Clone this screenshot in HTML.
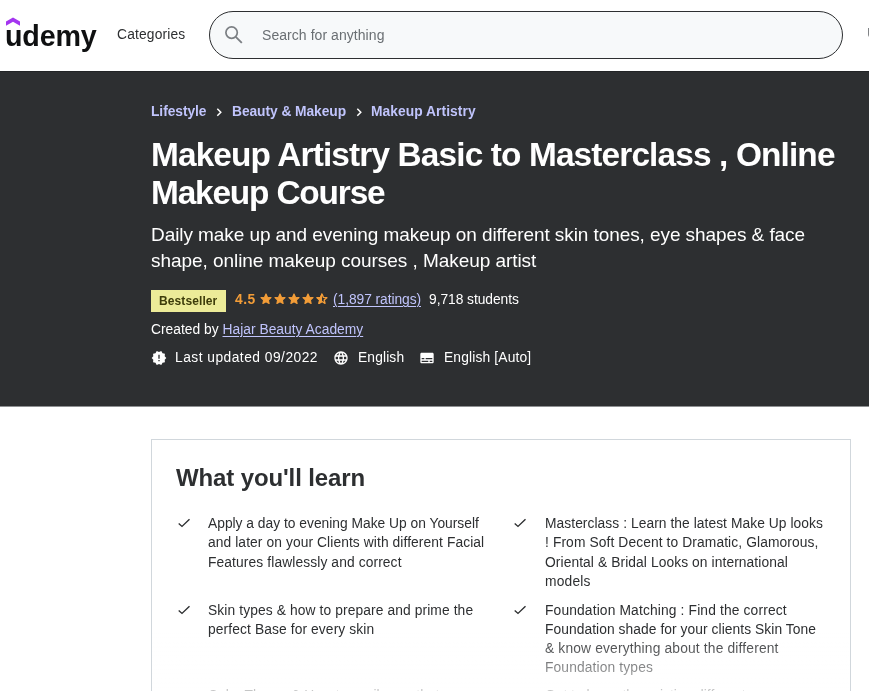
<!DOCTYPE html>
<html lang="en">
<head>
<meta charset="utf-8">
<title>Makeup Artistry Basic to Masterclass , Online Makeup Course | Udemy</title>
<style>
*{box-sizing:border-box;margin:0;padding:0}
html,body{width:869px;height:691px;overflow:hidden;background:#fff}
body{font-family:"Liberation Sans",sans-serif;color:#2d2f31;position:relative}
.abs{position:absolute;white-space:nowrap;will-change:transform}
.ic{position:absolute;display:block;overflow:visible}
a{color:inherit}
#header{position:absolute;left:0;top:0;width:869px;height:71px;background:#fff}
#logo{position:absolute;left:6px;top:17px;will-change:transform}
#cat{left:117px;top:27px;font-size:13.8px;line-height:16px;color:#2d2f31}
#search{position:absolute;left:209px;top:11px;width:634px;height:48px;border:1px solid #2d2f31;border-radius:24px;background:#f7f9fa}
#ph{left:262px;top:27px;font-size:14px;line-height:16px;color:#6a6f73}
#ub{left:867.1px;top:26px;font-size:13.8px;line-height:16px;color:#797c7f}
#hero{position:absolute;left:0;top:71px;width:869px;height:335px;background:#2d2f31;border-top:1px solid #222426;box-shadow:0 1px 0 #8e9092}
.bc{font-size:13.8px;font-weight:700;color:#c0c4fc;line-height:16px;top:104px}
.h1{font-size:33.4px;font-weight:700;color:#fff;line-height:38px}
.sub{font-size:19px;color:#fff;line-height:26px}
#badge{position:absolute;left:151px;top:290px;width:75px;height:22px;background:#eceb98}
#bt{left:159px;top:293px;font-size:12px;font-weight:700;line-height:16px;color:#3d3c0a}
.t14{font-size:13.8px;line-height:16px;color:#fff}
.lnk{color:#c0c4fc;text-decoration:underline;text-decoration-thickness:1px;text-underline-offset:2px}
#box{position:absolute;left:151px;top:439px;width:700px;height:300px;border:1px solid #d1d7dc;background:#fff}
#wyl{left:176px;top:464px;font-size:24px;font-weight:700;line-height:28px;color:#2d2f31}
.li{font-size:13.8px;line-height:19.6px;color:#2d2f31}
#fade{position:absolute;left:152px;top:633px;width:698px;height:58px;background:linear-gradient(rgba(255,255,255,0),rgba(255,255,255,.734))}
</style>
</head>
<body>
<div id="header">
  <svg id="logo" width="100" height="40" viewBox="0 0 100 40" style="overflow:visible">
    <path d="M0 4.500 L7 0.600 L14 4.500 V8.800 L7 4.800 L0 8.800 Z" fill="#a435f0"/>
    <text x="-1" y="28.8" font-family="Liberation Sans, sans-serif" font-size="28.7" font-weight="700" fill="#0f1011" letter-spacing="-0.2">udemy</text>
  </svg>
  <div class="abs" id="cat" style="letter-spacing:0.167px;">Categories</div>
  <div id="search"></div>
  <svg class="ic" style="left:222px;top:22.8px" width="24" height="24" viewBox="0 0 24 24"><circle cx="9.600" cy="9.600" r="5.700" fill="none" stroke="#7b7f83" stroke-width="1.700"/><path d="M13.800 13.800 L19.800 19.800" stroke="#7b7f83" stroke-width="1.900" fill="none"/></svg>
  <div class="abs" id="ph" style="letter-spacing:0.056px;">Search for anything</div>
  <div class="abs" id="ub">Udemy Business</div>
</div>

<div id="hero"></div>
<a class="abs bc" id="bc0" style="left:151px;letter-spacing:-0.062px;">Lifestyle</a>
<svg class="ic" style="left:211px;top:104px" width="16" height="16" viewBox="0 0 16 16"><polyline points="6.300,4.700 9.800,8.200 6.300,11.700" fill="none" stroke="#fff" stroke-width="1.500"/></svg>
<a class="abs bc" id="bc1" style="left:231.500px;letter-spacing:-0.064px;">Beauty &amp; Makeup</a>
<svg class="ic" style="left:351px;top:104px" width="16" height="16" viewBox="0 0 16 16"><polyline points="6.300,4.700 9.800,8.200 6.300,11.700" fill="none" stroke="#fff" stroke-width="1.500"/></svg>
<a class="abs bc" id="bc2" style="left:371px;letter-spacing:0.057px;">Makeup Artistry</a>

<div class="abs h1" id="h0" style="left:151px;top:136px;letter-spacing:-0.864px;">Makeup Artistry Basic to Masterclass , Online</div>
<div class="abs h1" id="h1" style="left:151px;top:174px;letter-spacing:-1.167px;">Makeup Course</div>

<div class="abs sub" id="s0" style="left:150.5px;top:222px;letter-spacing:-0.077px;">Daily make up and evening makeup on different skin tones, eye shapes &amp; face</div>
<div class="abs sub" id="s1" style="left:150.5px;top:248px;letter-spacing:-0.053px;">shape, online makeup courses , Makeup artist</div>

<div id="badge"></div>
<div class="abs" id="bt" style="letter-spacing:0.100px;">Bestseller</div>
<div class="abs t14" id="rt" style="left:234.500px;top:292px;font-weight:700;color:#f39d38;letter-spacing:0.500px;">4.5</div>
<svg class="ic" style="left:259px;top:292px" width="70" height="14" viewBox="0 0 70 14">
    <defs><clipPath id="half"><rect x="56" y="0" width="7" height="14"/></clipPath></defs>
    <path d="M7.00 1.90 L8.47 5.18 L12.04 5.56 L9.38 7.97 L10.12 11.49 L7.00 9.70 L3.88 11.49 L4.62 7.97 L1.96 5.56 L5.53 5.18 Z" fill="#f39d38" stroke="#f39d38" stroke-width="1.1" stroke-linejoin="round"/>
    <path d="M21.00 1.90 L22.47 5.18 L26.04 5.56 L23.38 7.97 L24.12 11.49 L21.00 9.70 L17.88 11.49 L18.62 7.97 L15.96 5.56 L19.53 5.18 Z" fill="#f39d38" stroke="#f39d38" stroke-width="1.1" stroke-linejoin="round"/>
    <path d="M35.00 1.90 L36.47 5.18 L40.04 5.56 L37.38 7.97 L38.12 11.49 L35.00 9.70 L31.88 11.49 L32.62 7.97 L29.96 5.56 L33.53 5.18 Z" fill="#f39d38" stroke="#f39d38" stroke-width="1.1" stroke-linejoin="round"/>
    <path d="M49.00 1.90 L50.47 5.18 L54.04 5.56 L51.38 7.97 L52.12 11.49 L49.00 9.70 L45.88 11.49 L46.62 7.97 L43.96 5.56 L47.53 5.18 Z" fill="#f39d38" stroke="#f39d38" stroke-width="1.1" stroke-linejoin="round"/>
    <path d="M63.00 2.10 L64.35 5.34 L67.85 5.62 L65.19 7.91 L66.00 11.33 L63.00 9.50 L60.00 11.33 L60.81 7.91 L58.15 5.62 L61.65 5.34 Z" fill="none" stroke="#f39d38" stroke-width="1.4" stroke-linejoin="round"/>
    <g clip-path="url(#half)"><path d="M63.00 1.90 L64.47 5.18 L68.04 5.56 L65.38 7.97 L66.12 11.49 L63.00 9.70 L59.88 11.49 L60.62 7.97 L57.96 5.56 L61.53 5.18 Z" fill="#f39d38" stroke="#f39d38" stroke-width="1.1" stroke-linejoin="round"/></g>
</svg>
<a class="abs t14 lnk" id="rc" style="left:332.500px;top:292px;letter-spacing:-0.064px;">(1,897 ratings)</a>
<div class="abs t14" id="st" style="left:429px;top:292px;letter-spacing:-0.046px;">9,718 students</div>

<div class="abs t14" id="cb" style="left:151px;top:322px;letter-spacing:0.017px;">Created by <a class="lnk">Hajar Beauty Academy</a></div>

<svg class="ic" style="left:151.300px;top:349.600px" width="16" height="16" viewBox="0 0 24 24"><path fill="#fff" d="M23 12l-2.440-2.780.340-3.680-3.610-.820-1.890-3.180L12 3 8.600 1.540 6.710 4.720l-3.610.810.340 3.680L1 12l2.440 2.780-.340 3.690 3.610.820 1.890 3.180L12 21l3.400 1.460 1.890-3.180 3.610-.820-.340-3.680L23 12zm-10 5h-2v-2h2v2zm0-4h-2V7h2v6z"/></svg>
<div class="abs t14" id="lu" style="left:175px;top:350px;letter-spacing:0.474px;">Last updated 09/2022</div>
<svg class="ic" style="left:333px;top:350px" width="16" height="16" viewBox="0 0 24 24"><path fill="#fff" d="M11.990 2C6.470 2 2 6.480 2 12s4.470 10 9.990 10C17.520 22 22 17.520 22 12S17.520 2 11.990 2zm6.930 6h-2.950a15.650 15.650 0 0 0-1.380-3.560A8.030 8.030 0 0 1 18.920 8zM12 4.040c.83 1.200 1.480 2.530 1.910 3.960h-3.820c.43-1.430 1.080-2.760 1.910-3.960zM4.260 14C4.100 13.360 4 12.690 4 12s.1-1.360.26-2h3.380c-.08.660-.14 1.320-.14 2 0 .68.060 1.340.14 2H4.260zm.82 2h2.950c.32 1.250.78 2.450 1.380 3.560A7.987 7.987 0 0 1 5.080 16zm2.950-8H5.080a7.987 7.987 0 0 1 4.330-3.560A15.650 15.650 0 0 0 8.030 8zM12 19.960c-.83-1.200-1.480-2.530-1.910-3.960h3.820c-.43 1.430-1.080 2.760-1.910 3.960zM14.340 14H9.660c-.09-.66-.16-1.320-.16-2 0-.68.070-1.350.16-2h4.680c.09.650.16 1.320.16 2 0 .68-.07 1.340-.16 2zm.25 5.560c.6-1.110 1.060-2.310 1.380-3.560h2.950a8.030 8.030 0 0 1-4.330 3.560zM16.360 14c.08-.66.140-1.320.140-2 0-.68-.06-1.340-.14-2h3.380c.16.640.26 1.310.26 2s-.1 1.360-.26 2h-3.380z"/></svg>
<div class="abs t14" id="en" style="left:357.500px;top:350px;letter-spacing:0.133px;">English</div>
<svg class="ic" style="left:419.200px;top:350.200px" width="16" height="16" viewBox="0 0 24 24"><path fill="#fff" d="M20 4H4c-1.100 0-2 .900-2 2v12c0 1.100.900 2 2 2h16c1.100 0 2-.900 2-2V6c0-1.100-.900-2-2-2zM4 12h4v2H4v-2zm10 6H4v-2h10v2zm6 0h-4v-2h4v2zm0-4H10v-2h10v2z"/></svg>
<div class="abs t14" id="ea" style="left:444px;top:350px;letter-spacing:0.154px;">English [Auto]</div>

<div id="box"></div>
<div class="abs" id="wyl" style="letter-spacing:-0.119px;">What you'll learn</div>

<svg class="ic" style="left:176px;top:515px" width="16" height="16" viewBox="0 0 16 16"><polyline points="2.7,8.400 6,11.400 13.500,4.200" fill="none" stroke="#2d2f31" stroke-width="1.4"/></svg>
<div class="abs li" id="a0" style="left:208px;top:514px;letter-spacing:0.002px;">Apply a day to evening Make Up on Yourself</div>
<div class="abs li" id="a1" style="left:208px;top:533px;letter-spacing:0.091px;">and later on your Clients with different Facial</div>
<div class="abs li" id="a2" style="left:208px;top:553px;letter-spacing:0.110px;">Features flawlessly and correct</div>
<svg class="ic" style="left:512.3px;top:515px" width="16" height="16" viewBox="0 0 16 16"><polyline points="2.7,8.400 6,11.400 13.500,4.200" fill="none" stroke="#2d2f31" stroke-width="1.4"/></svg>
<div class="abs li" id="b0" style="left:545px;top:514px;letter-spacing:0.060px;">Masterclass : Learn the latest Make Up looks</div>
<div class="abs li" id="b1" style="left:545px;top:533px;letter-spacing:0.105px;">! From Soft Decent to Dramatic, Glamorous,</div>
<div class="abs li" id="b2" style="left:545px;top:553px;letter-spacing:0.090px;">Oriental &amp; Bridal Looks on international</div>
<div class="abs li" id="b3" style="left:545px;top:572px;letter-spacing:0.180px;">models</div>
<svg class="ic" style="left:176px;top:602px" width="16" height="16" viewBox="0 0 16 16"><polyline points="2.7,8.400 6,11.400 13.500,4.200" fill="none" stroke="#2d2f31" stroke-width="1.4"/></svg>
<div class="abs li" id="c0" style="left:208px;top:601px;letter-spacing:0.108px;">Skin types &amp; how to prepare and prime the</div>
<div class="abs li" id="c1" style="left:208px;top:620px;letter-spacing:0.108px;">perfect Base for every skin</div>
<svg class="ic" style="left:512.3px;top:602px" width="16" height="16" viewBox="0 0 16 16"><polyline points="2.7,8.400 6,11.400 13.500,4.200" fill="none" stroke="#2d2f31" stroke-width="1.4"/></svg>
<div class="abs li" id="d0" style="left:545px;top:601px;letter-spacing:0.146px;">Foundation Matching : Find the correct</div>
<div class="abs li" id="d1" style="left:545px;top:620px;letter-spacing:0.064px;">Foundation shade for your clients Skin Tone</div>
<div class="abs li" id="d2" style="left:545px;top:639px;letter-spacing:0.164px;">&amp; know everything about the different</div>
<div class="abs li" id="d3" style="left:545px;top:658px;letter-spacing:0.133px;">Foundation types</div>
<div class="abs li" id="e0" style="left:208px;top:686px;">Color Theory &amp; How to easily use that</div>
<div class="abs li" id="f0" style="left:545px;top:686px;">Get to know the existing different</div>
<div id="fade"></div>
</body>
</html>
